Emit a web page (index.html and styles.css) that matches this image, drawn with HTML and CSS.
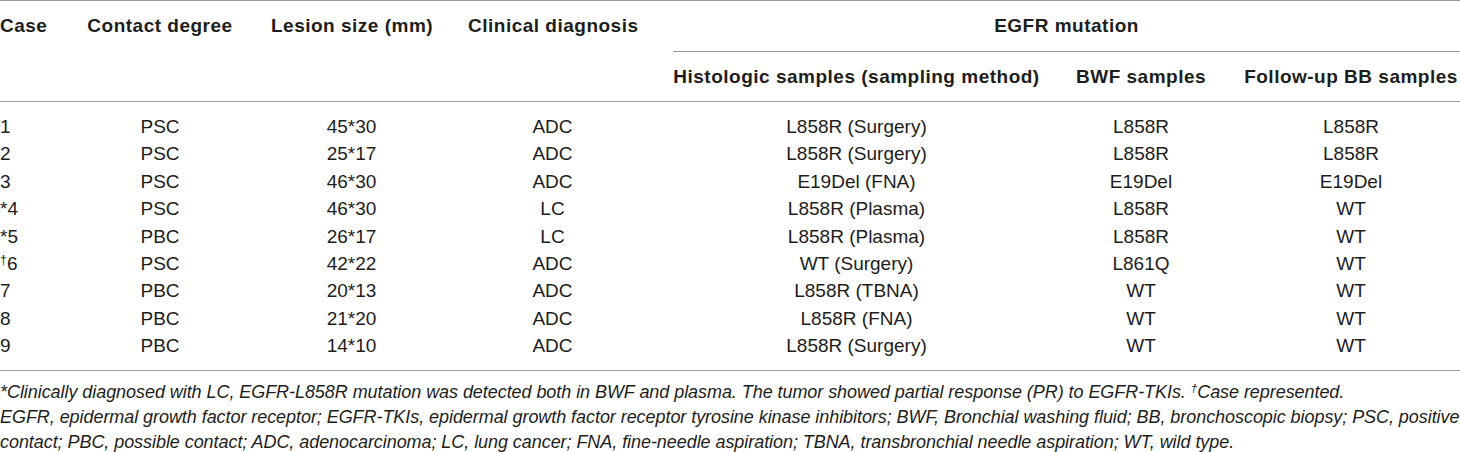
FILE: index.html
```html
<!DOCTYPE html>
<html lang="en">
<head>
    <meta charset="UTF-8">
    <meta name="viewport" content="width=device-width, initial-scale=1.0">
    <title>EGFR mutation table</title>
    <link rel="stylesheet" href="styles.css">
</head>
<body>
    <div class="wrap">
        <table class="results">
            <colgroup>
                <col class="c-case">
                <col class="c-contact">
                <col class="c-lesion">
                <col class="c-clin">
                <col class="c-histo">
                <col class="c-bwf">
                <col class="c-bb">
            </colgroup>
            <thead>
                <tr>
                    <th rowspan="2" class="first">Case</th>
                    <th rowspan="2">Contact degree</th>
                    <th rowspan="2">Lesion size (mm)</th>
                    <th rowspan="2">Clinical diagnosis</th>
                    <th colspan="3" class="group last"><div>EGFR mutation</div></th>
                </tr>
                <tr class="sub">
                    <th>Histologic samples (sampling method)</th>
                    <th>BWF samples</th>
                    <th class="last">Follow-up BB samples</th>
                </tr>
            </thead>
            <tbody>
                <tr><td>1</td><td>PSC</td><td>45*30</td><td>ADC</td><td>L858R (Surgery)</td><td>L858R</td><td>L858R</td></tr>
                <tr><td>2</td><td>PSC</td><td>25*17</td><td>ADC</td><td>L858R (Surgery)</td><td>L858R</td><td>L858R</td></tr>
                <tr><td>3</td><td>PSC</td><td>46*30</td><td>ADC</td><td>E19Del (FNA)</td><td>E19Del</td><td>E19Del</td></tr>
                <tr><td>*4</td><td>PSC</td><td>46*30</td><td>LC</td><td>L858R (Plasma)</td><td>L858R</td><td>WT</td></tr>
                <tr><td>*5</td><td>PBC</td><td>26*17</td><td>LC</td><td>L858R (Plasma)</td><td>L858R</td><td>WT</td></tr>
                <tr><td><sup>†</sup>6</td><td>PSC</td><td>42*22</td><td>ADC</td><td>WT (Surgery)</td><td>L861Q</td><td>WT</td></tr>
                <tr><td>7</td><td>PBC</td><td>20*13</td><td>ADC</td><td>L858R (TBNA)</td><td>WT</td><td>WT</td></tr>
                <tr><td>8</td><td>PBC</td><td>21*20</td><td>ADC</td><td>L858R (FNA)</td><td>WT</td><td>WT</td></tr>
                <tr><td>9</td><td>PBC</td><td>14*10</td><td>ADC</td><td>L858R (Surgery)</td><td>WT</td><td>WT</td></tr>
            </tbody>
        </table>
        <div class="notes">
            <p>*Clinically diagnosed with LC, EGFR-L858R mutation was detected both in BWF and plasma. The tumor showed partial response (PR) to EGFR-TKIs. <sup>†</sup>Case represented.</p>
            <p>EGFR, epidermal growth factor receptor; EGFR-TKIs, epidermal growth factor receptor tyrosine kinase inhibitors; BWF, Bronchial washing fluid; BB, bronchoscopic biopsy; PSC, positive contact; PBC, possible contact; ADC, adenocarcinoma; LC, lung cancer; FNA, fine-needle aspiration; TBNA, transbronchial needle aspiration; WT, wild type.</p>
        </div>
    </div>
</body>
</html>
```

FILE: styles.css
```css
body {
    margin: 0;
    background-color: #fff;
    color: #1d1d1b;
    font-family: "Liberation Sans", Arial, sans-serif;
}

.wrap {
    width: 1460px;
}

.results {
    width: 1460px;
    border-collapse: collapse;
    table-layout: fixed;
    border-top: 1px solid #9a9a9a;
    border-bottom: 1px solid #9a9a9a;
    font-size: 19px;
}

.c-case { width: 67px; }
.c-contact { width: 186px; }
.c-lesion { width: 197px; }
.c-clin { width: 205px; }
.c-histo { width: 403px; }
.c-bwf { width: 166px; }
.c-bb { width: 236px; }

.results thead {
    border-bottom: 1px solid #9a9a9a;
}

.results th {
    font-weight: bold;
    letter-spacing: 0.5px;
    text-align: center;
    vertical-align: top;
    padding: 0 18px;
    line-height: 50px;
    white-space: nowrap;
}

.results th.first {
    text-align: left;
    padding-left: 0;
}

.results th.last,
.results td:last-child {
    padding-right: 0;
}

.results th.group div {
    border-bottom: 1px solid #9a9a9a;
}

.results .sub th {
    line-height: 49px;
}

.results td {
    text-align: center;
    padding: 0 18px;
    line-height: 27.4px;
    white-space: nowrap;
}

.results td:first-child {
    text-align: left;
    padding-left: 0;
}

.results tbody tr:first-child td {
    padding-top: 11px;
}

.results tbody tr:last-child td {
    padding-bottom: 10px;
}

sup {
    font-size: 0.65em;
    line-height: 0;
    vertical-align: 0.5em;
}

.notes {
    margin-top: 9px;
    font-size: 18px;
    font-style: italic;
    letter-spacing: -0.06px;
    line-height: 25px;
}

.notes p {
    margin: 0;
}
```
